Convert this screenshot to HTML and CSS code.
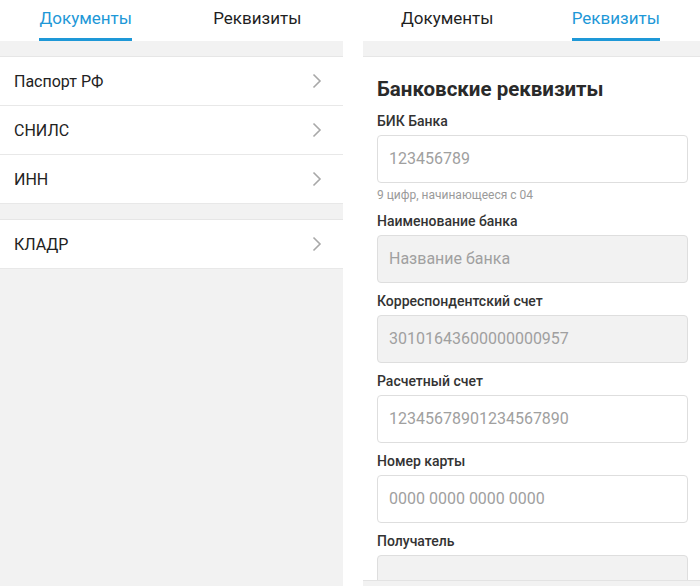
FILE: index.html
```html
<!DOCTYPE html>
<html lang="ru">
<head>
<meta charset="utf-8">
<link rel="stylesheet" href="styles.css">
</head>
<body>
<div class="screen left">
  <div class="tabs">
    <div class="tab active"><span>Документы</span></div>
    <div class="tab"><span>Реквизиты</span></div>
  </div>
  <div class="band"></div>
  <div class="group">
    <div class="row"><span>Паспорт РФ</span><svg class="chev" width="10" height="16" viewBox="0 0 10 16"><path d="M1.5 1.5 L8 8 L1.5 14.5" fill="none" stroke="#a8a8a8" stroke-width="1.6"/></svg></div>
    <div class="row"><span>СНИЛС</span><svg class="chev" width="10" height="16" viewBox="0 0 10 16"><path d="M1.5 1.5 L8 8 L1.5 14.5" fill="none" stroke="#a8a8a8" stroke-width="1.6"/></svg></div>
    <div class="row"><span>ИНН</span><svg class="chev" width="10" height="16" viewBox="0 0 10 16"><path d="M1.5 1.5 L8 8 L1.5 14.5" fill="none" stroke="#a8a8a8" stroke-width="1.6"/></svg></div>
  </div>
  <div class="band"></div>
  <div class="group">
    <div class="row"><span>КЛАДР</span><svg class="chev" width="10" height="16" viewBox="0 0 10 16"><path d="M1.5 1.5 L8 8 L1.5 14.5" fill="none" stroke="#a8a8a8" stroke-width="1.6"/></svg></div>
  </div>
</div>
<div class="screen right">
  <div class="tabs">
    <div class="tab"><span>Документы</span></div>
    <div class="tab active"><span>Реквизиты</span></div>
  </div>
  <div class="band"></div>
  <div class="form">
    <h1 class="title">Банковские реквизиты</h1>
    <div class="label">БИК Банка</div>
    <div class="field">123456789</div>
    <div class="hint">9 цифр, начинающееся с 04</div>
    <div class="label">Наименование банка</div>
    <div class="field disabled">Название банка</div>
    <div class="label">Корреспондентский счет</div>
    <div class="field disabled">30101643600000000957</div>
    <div class="label">Расчетный счет</div>
    <div class="field">12345678901234567890</div>
    <div class="label">Номер карты</div>
    <div class="field">0000 0000 0000 0000</div>
    <div class="label">Получатель</div>
    <div class="field disabled"></div>
  </div>
  <div class="footer"></div>
</div>
</body>
</html>
```
FILE: styles.css
```css
html, body {
  margin: 0;
  padding: 0;
  background: #ffffff;
}
body {
  display: flex;
  gap: 20px;
  width: 700px;
  height: 586px;
  overflow: hidden;
  font-family: Roboto, "Noto Sans", sans-serif;
  color: #222222;
}
.screen {
  display: flex;
  flex-direction: column;
  height: 586px;
  overflow: hidden;
}
.left {
  width: 343px;
  background: #f2f2f2;
}
.right {
  flex: 1;
  background: #ffffff;
}
.tabs {
  display: flex;
  height: 41px;
  background: #ffffff;
  flex: none;
}
.tab {
  flex: 1;
  display: flex;
  justify-content: center;
}
.tab span {
  display: block;
  height: 38px;
  line-height: 36px;
  font-size: 17px;
  font-weight: 400;
  color: #1f1f1f;
  border-bottom: 3px solid transparent;
}
.tab.active span {
  color: #1e98d7;
  border-bottom-color: #1e98d7;
}
.band {
  height: 15px;
  background: #f2f2f2;
  border-bottom: 1px solid #e6e6e6;
  flex: none;
}
.group {
  background: #ffffff;
}
.row {
  display: flex;
  align-items: center;
  justify-content: space-between;
  height: 48px;
  padding: 0 21px 0 14px;
  border-bottom: 1px solid #e8e8e8;
  font-size: 16px;
  color: #222222;
}
.chev {
  display: block;
}
.form {
  flex: 1;
  overflow: hidden;
  padding: 0 12px 0 14px;
}
.title {
  margin: 18px 0 0;
  font-size: 20.5px;
  line-height: 28px;
  font-weight: 700;
  color: #2a2a2a;
}
.label {
  margin-top: 8px;
  font-size: 14px;
  line-height: 20px;
  font-weight: 500;
  color: #333333;
}
.field {
  box-sizing: border-box;
  height: 48px;
  margin-top: 4px;
  padding: 0 11px;
  border: 1px solid #dedede;
  border-radius: 4px;
  background: #ffffff;
  font-size: 16px;
  line-height: 46px;
  color: #a0a0a0;
}
.field.disabled {
  background: #f2f2f2;
}
.hint {
  margin-top: 4px;
  margin-bottom: 3px;
  font-size: 12px;
  line-height: 16px;
  color: #9a9a9a;
}
.footer {
  height: 5px;
  flex: none;
  background: #f2f2f2;
  border-top: 1px solid #e3e3e3;
}
```
